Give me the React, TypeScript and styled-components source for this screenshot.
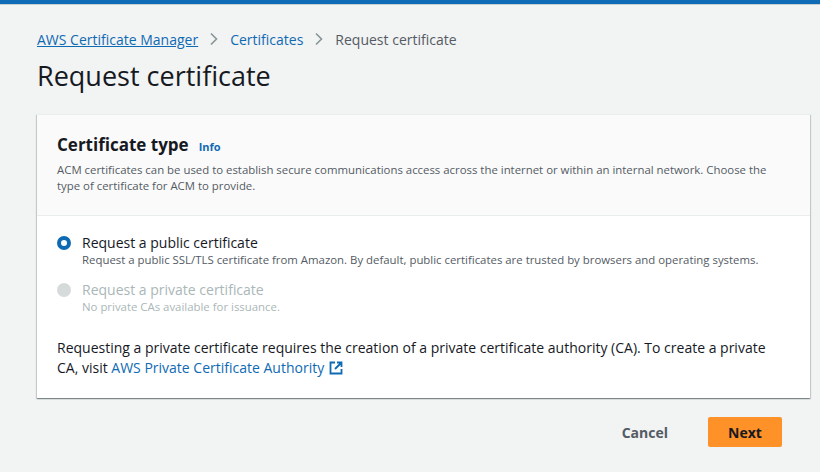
import styled, { createGlobalStyle } from "styled-components";

const Global = createGlobalStyle`
  body { margin: 0; background: #f2f3f3; font-family: "Open Sans", "Noto Sans", sans-serif; color: #16191f; }
`;

const TopBar = styled.div`
  height: 4px;
  background: #0f6bb5;
  border-bottom: 1px solid #c8ced1;
`;

const Page = styled.div`
  padding: 24px 10px 0 37px;
`;

const Crumbs = styled.nav`
  display: flex;
  align-items: center;
  gap: 11px;
  font-size: 14px;
  height: 20px;
`;

const Crumb = styled.a<{ $under?: boolean }>`
  color: #0f6ab4;
  text-decoration: ${(p) => (p.$under ? "underline" : "none")};
`;

const Current = styled.span`
  color: #545b64;
`;

const Title = styled.h1`
  font-size: 27px;
  font-weight: 400;
  margin: 10px 0 21px;
  line-height: 34px;
`;

const Card = styled.section`
  background: #fff;
  box-shadow: 0 1px 1px rgba(0, 28, 36, 0.3), 1px 1px 1px rgba(0, 28, 36, 0.15), -1px 1px 1px rgba(0, 28, 36, 0.15);
  border-top: 1px solid #eaeded;
`;

const Header = styled.div`
  background: #fafafa;
  border-bottom: 1px solid #eaeded;
  padding: 18px 20px 21px;
`;

const H2 = styled.h2`
  margin: 0 0 6px;
  font-size: 17px;
  font-weight: 700;
  display: flex;
  align-items: baseline;
  gap: 10px;
`;

const Info = styled.span`
  font-size: 11px;
  color: #0f6ab4;
`;

const Desc = styled.p`
  margin: 0;
  font-size: 11.4px;
  line-height: 16px;
  color: #545b64;
`;

const Body = styled.div`
  padding: 17px 28px 20px 20px;
`;

const Option = styled.div<{ $disabled?: boolean }>`
  display: grid;
  grid-template-columns: 15px 1fr;
  column-gap: 10px;
  margin-bottom: 13px;
  color: ${(p) => (p.$disabled ? "#aab7b8" : "#16191f")};
`;

const Radio = styled.span<{ $on?: boolean }>`
  width: 14px;
  height: 14px;
  margin-top: 3px;
  border-radius: 50%;
  box-sizing: border-box;
  background: ${(p) => (p.$on ? "#fff" : "#d5dbdb")};
  border: ${(p) => (p.$on ? "4px solid #0f6ab4" : "none")};
`;

const Label = styled.div`
  font-size: 14px;
  line-height: 19px;
`;

const Sub = styled.div<{ $disabled?: boolean }>`
  font-size: 11.4px;
  line-height: 15px;
  color: ${(p) => (p.$disabled ? "#aab7b8" : "#545b64")};
`;

const Note = styled.p`
  margin: 24px 0 0;
  font-size: 14px;
  line-height: 20px;
`;

const Link = styled.a`
  color: #0f6ab4;
  text-decoration: none;
`;

const Actions = styled.div`
  display: flex;
  justify-content: flex-end;
  align-items: center;
  gap: 34px;
  padding: 19px 28px 0 0;
`;

const Cancel = styled.button`
  background: none;
  border: none;
  font: 700 14px "Open Sans", sans-serif;
  color: #545b64;
`;

const Next = styled.button`
  background: #ff9129;
  border: none;
  border-radius: 2px;
  width: 74px;
  height: 30px;
  font: 700 14px "Open Sans", sans-serif;
  color: #16191f;
`;

const Chevron = () => (
  <svg width="10" height="14" viewBox="0 0 10 14" fill="none" stroke="#879596" strokeWidth="1.6">
    <path d="M2 1.5 7.5 7 2 12.5" />
  </svg>
);

const External = () => (
  <svg width="14" height="14" viewBox="0 0 14 14" fill="none" stroke="#0f6ab4" strokeWidth="1.8" style={{ verticalAlign: "-2px", marginLeft: 5 }}>
    <path d="M6 1.5H1.5v11h11V8" />
    <path d="M8 1.5h4.5V6M12.5 1.5 6 8" />
  </svg>
);

export default function App() {
  return (
    <>
      <Global />
      <TopBar />
      <Page>
        <Crumbs>
          <Crumb $under>AWS Certificate Manager</Crumb>
          <Chevron />
          <Crumb>Certificates</Crumb>
          <Chevron />
          <Current>Request certificate</Current>
        </Crumbs>
        <Title>Request certificate</Title>
        <Card>
          <Header>
            <H2>
              Certificate type <Info>Info</Info>
            </H2>
            <Desc>
              ACM certificates can be used to establish secure communications access across the internet or within an internal network. Choose the type of certificate for ACM to provide.
            </Desc>
          </Header>
          <Body>
            <Option>
              <Radio $on />
              <div>
                <Label>Request a public certificate</Label>
                <Sub>Request a public SSL/TLS certificate from Amazon. By default, public certificates are trusted by browsers and operating systems.</Sub>
              </div>
            </Option>
            <Option $disabled>
              <Radio />
              <div>
                <Label>Request a private certificate</Label>
                <Sub $disabled>No private CAs available for issuance.</Sub>
              </div>
            </Option>
            <Note>
              Requesting a private certificate requires the creation of a private certificate authority (CA). To create a private CA, visit <Link>AWS Private Certificate Authority</Link>
              <External />
            </Note>
          </Body>
        </Card>
        <Actions>
          <Cancel>Cancel</Cancel>
          <Next>Next</Next>
        </Actions>
      </Page>
    </>
  );
}
